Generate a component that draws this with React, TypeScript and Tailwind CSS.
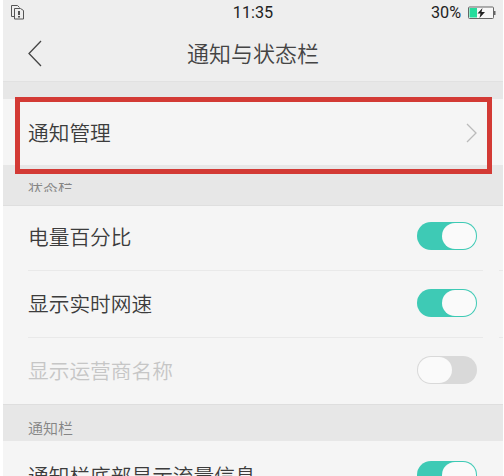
import React from "react";

function Toggle({ on }: { on: boolean }) {
  return (
    <div
      className={
        on
          ? "mr-[26px] mb-[2px] flex h-7 w-[60px] shrink-0 items-center justify-end rounded-full bg-[#3ecab5] px-px"
          : "mr-[26px] mb-[2px] flex h-7 w-[60px] shrink-0 items-center justify-start rounded-full bg-[#d9d9d9] px-px"
      }
    >
      <div className="h-[26px] w-[34px] rounded-full bg-[#fafafa]" />
    </div>
  );
}

function Row({
  label,
  on,
  disabled = false,
  edge = "none",
}: {
  label: string;
  on: boolean;
  disabled?: boolean;
  edge?: "none" | "first" | "last";
}) {
  const box = {
    none: "flex h-[66px] shrink-0 items-center justify-between pl-[25px]",
    first: "flex h-16 shrink-0 items-center justify-between pb-[3px] pl-[25px]",
    last: "flex h-[70px] shrink-0 items-center justify-between pl-[25px]",
  }[edge];
  return (
    <div className={box}>
      <span className={disabled ? "text-[20.7px] text-[#c6c6c6]" : "text-[20.7px] text-[#3c3c3c]"}>{label}</span>
      <Toggle on={on} />
    </div>
  );
}

function Divider() {
  return (
    <div className="flex h-px shrink-0 justify-between">
      <div className="ml-[25px] w-[455px] bg-[#e9e9e9]" />
      <div className="w-1 bg-[#e9e9e9]" />
    </div>
  );
}

export default function App() {
  return (
    <div className="h-[476px] w-[504px] overflow-hidden bg-white pl-[3px] pr-px font-['Noto_Sans_CJK_SC',sans-serif] font-[350]">
      <div className="flex h-full flex-col overflow-hidden bg-[#f5f5f5]">
        <header className="h-[81px] shrink-0 bg-[#eeeeee]">
          <div className="grid h-6 grid-cols-3 items-center font-['Roboto',sans-serif] text-[16.2px] font-normal text-[#222]">
            <svg className="ml-2 h-[15px] w-[13px]" viewBox="0 0 13 15" fill="none" stroke="#555">
              <path d="M3.500 11.500H.5V.5h6l2 2" />
              <path d="M3.500 3.500h6l3 2v8.500h-9z" />
              <path d="M8 6v4M8 11v1.500" stroke="#222" strokeWidth="1.500" />
            </svg>
            <span className="pt-px text-center">11:35</span>
            <div className="flex items-center justify-end gap-[7px] pr-[7px]">
              <span>30%</span>
              <svg className="h-[14px] w-7" viewBox="0 0 28 14">
                <rect x=".5" y="1" width="25" height="11.500" rx="1" fill="#f7f7f7" stroke="#666" />
                <path d="M1.500 2H9v9.500H1.500z" fill="#25dc9c" />
                <path d="M26 5h1.500v4H26z" fill="#666" />
                <path d="M14.500 2 9.500 7.500h3l-1 4.500 5.500-6h-3.500z" fill="#222" />
              </svg>
            </div>
          </div>
          <div className="grid h-[57px] grid-cols-[60px_1fr_60px] items-start pt-3">
            <svg className="ml-[25px] mt-1 h-[27px] w-[14px]" viewBox="0 0 14 27" fill="none" stroke="#444" strokeWidth="1.300">
              <path d="M13 1 1 13.500 13 26" />
            </svg>
            <h1 className="text-center text-[22px] leading-8 text-[#444]">通知与状态栏</h1>
          </div>
        </header>
        <div className="h-[18px] shrink-0 border-t border-[#e1e1e1] bg-[#e7e7e7]" />
        <div className="relative flex h-[66px] shrink-0 items-center justify-between pl-[25px] pr-[26px] pt-px">
          <span className="text-[20.7px] text-[#3c3c3c]">通知管理</span>
          <svg className="h-5 w-[11px]" viewBox="0 0 11 20" fill="none" stroke="#bbb" strokeWidth="1.300">
            <path d="m1 1 9 9-9 9" />
          </svg>
          <div className="absolute -top-[2px] left-3 h-[77px] w-[477px] border-[5px] border-[#d33a35]" />
        </div>
        <div className="h-[41px] shrink-0 border-b border-[#dfdfdf] bg-[#e7e7e7] pl-[25px] pt-[18px]">
          <div className="h-[9px] overflow-hidden text-[15px] leading-[15px] text-[#858585]">
            <div className="-mt-[4px]">状态栏</div>
          </div>
        </div>
        <Row label="电量百分比" on edge="first" />
        <Divider />
        <Row label="显示实时网速" on />
        <Divider />
        <Row label="显示运营商名称" on={false} disabled />
        <div className="flex h-[37px] shrink-0 items-end border-t border-[#dedede] bg-[#e7e7e7] pb-[3px] pl-[25px] text-[15px] leading-5 text-[#858585]">
          通知栏
        </div>
        <Row label="通知栏底部显示流量信息" on edge="last" />
      </div>
    </div>
  );
}
